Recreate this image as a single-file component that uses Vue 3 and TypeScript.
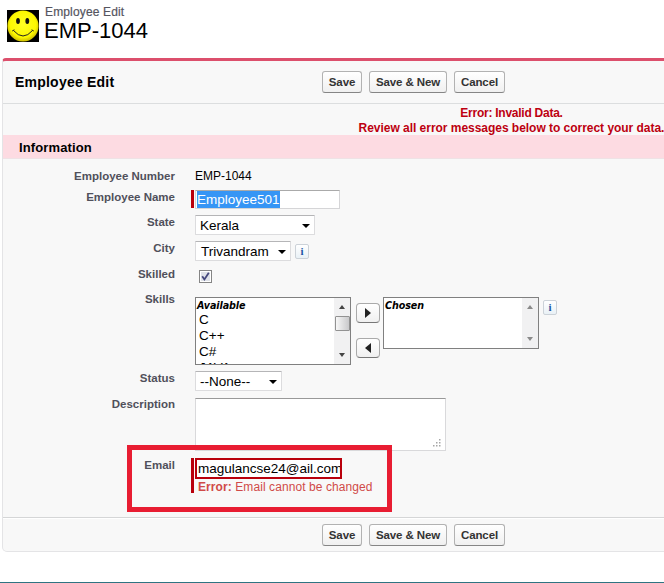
<script setup lang="ts">
import { ref } from 'vue'

const actions = [
  { label: 'Save', width: 40 },
  { label: 'Save & New', width: 78 },
  { label: 'Cancel', width: 51 },
]
const available = ref<string[]>(['C', 'C++', 'C#', 'JAVA'])
</script>

<template>
  <main class="page">
    <header class="page-head">
      <svg class="smiley" viewBox="0 0 32 32">
        <defs>
          <radialGradient id="face" cx="50%" cy="45%" r="52%">
            <stop offset="0" stop-color="#ffff24" />
            <stop offset="0.8" stop-color="#fcf800" />
            <stop offset="1" stop-color="#d6c800" />
          </radialGradient>
        </defs>
        <rect width="32" height="32" fill="#000" />
        <circle cx="16" cy="16" r="15.6" fill="url(#face)" />
        <ellipse cx="11" cy="11" rx="1.9" ry="3" fill="#111" />
        <ellipse cx="20.3" cy="11" rx="1.9" ry="3" fill="#111" />
        <path d="M6.5 20.5 Q16 31.5 25.5 20.5 M5.2 21 L7.4 19.8 M24.6 19.8 L26.8 21" fill="none" stroke="#222" stroke-width="1" />
      </svg>
      <div class="names">
        <div class="kind">Employee Edit</div>
        <h1>EMP-1044</h1>
      </div>
    </header>

    <section class="panel">
      <div class="bar">
        <h2>Employee Edit</h2>
        <div class="actions">
          <button v-for="a in actions" :key="a.label" :style="{ width: a.width + 'px' }">{{ a.label }}</button>
        </div>
      </div>
      <div class="alert">
        <div><span class="a1">Error: Invalid Data.</span></div>
        <div><span class="a2">Review all error messages below to correct your data.</span></div>
      </div>
      <h3 class="section">Information</h3>

      <div class="form">
        <div class="row r-number">
          <label>Employee Number</label>
          <div class="field static">EMP-1044</div>
        </div>
        <div class="row r-name">
          <label>Employee Name</label>
          <div class="field">
            <i class="req"></i>
            <div class="input"><span class="selected">Employee501</span></div>
          </div>
        </div>
        <div class="row r-pick">
          <label>State</label>
          <div class="field">
            <div class="select state"><span>Kerala</span><i class="caret"></i></div>
          </div>
        </div>
        <div class="row r-pick">
          <label>City</label>
          <div class="field">
            <div class="select city"><span>Trivandram</span><i class="caret"></i></div>
            <span class="info">i</span>
          </div>
        </div>
        <div class="row r-skilled">
          <label>Skilled</label>
          <div class="field">
            <svg class="check" viewBox="0 0 13 13">
              <rect x="0.5" y="0.5" width="12" height="12" fill="#fff" stroke="#858585" />
              <rect x="2" y="2" width="9" height="9" fill="#dfe2e8" />
              <path d="M3.2 6.2 L5.4 9.4 L9.8 2.8" fill="none" stroke="#44477c" stroke-width="1.8" />
            </svg>
          </div>
        </div>
        <div class="row r-skills">
          <label>Skills</label>
          <div class="field">
            <div class="list tall">
              <div class="items">
                <div class="caption">Available</div>
                <div v-for="s in available" :key="s" class="item">{{ s }}</div>
              </div>
              <div class="scroll"><i class="up"></i><i class="thumb"></i><i class="down"></i></div>
            </div>
            <div class="movers">
              <button class="move"><svg viewBox="0 0 6 10"><path d="M0 0 L6 5 L0 10Z" fill="#222" /></svg></button>
              <button class="move"><svg viewBox="0 0 6 10"><path d="M6 0 L0 5 L6 10Z" fill="#222" /></svg></button>
            </div>
            <div class="list short">
              <div class="items"><div class="caption chosen">Chosen</div></div>
              <div class="scroll dim"><i class="up"></i><i class="down"></i></div>
            </div>
            <span class="info">i</span>
          </div>
        </div>
        <div class="row r-pick">
          <label>Status</label>
          <div class="field">
            <div class="select status"><span>--None--</span><i class="caret"></i></div>
          </div>
        </div>
        <div class="row r-desc">
          <label>Description</label>
          <div class="field">
            <div class="area">
              <svg viewBox="0 0 8 8" fill="#a6a6a6">
                <path d="M6 0h1.5v1.5h-1.5z M3 3h1.5v1.5h-1.5z M6 3h1.5v1.5h-1.5z M0 6h1.5v1.5h-1.5z M3 6h1.5v1.5h-1.5z M6 6h1.5v1.5h-1.5z" />
              </svg>
            </div>
          </div>
        </div>
        <div class="row r-email">
          <label>Email</label>
          <div class="field">
            <i class="req long"></i>
            <div>
              <div class="input bad"><span>magulancse24@ail.com</span></div>
              <div class="msg"><b>Error:</b> Email cannot be changed</div>
            </div>
          </div>
          <div class="highlight"></div>
        </div>
      </div>

      <div class="bar foot">
        <div class="actions">
          <button v-for="a in actions" :key="a.label" :style="{ width: a.width + 'px' }">{{ a.label }}</button>
        </div>
      </div>
    </section>
    <div class="rule"></div>
  </main>
</template>

<style>
body { background: #fff; overflow: hidden; }
</style>

<style scoped>
* { box-sizing: border-box; }
.page { width: 664px; height: 583px; overflow: hidden; display: flex; flex-direction: column; font-family: "Liberation Sans", Arial, sans-serif; color: #000; }
.page-head { height: 58px; flex: none; display: flex; padding: 10px 0 0 7px; }
.smiley { width: 32px; height: 32px; flex: none; }
.names { padding-left: 6px; margin-top: -5px; white-space: nowrap; }
.kind { font-size: 12px; line-height: 14px; letter-spacing: 0.15px; color: #55555f; -webkit-text-stroke: 0.2px #55555f; }
h1, h2, h3 { margin: 0; }
h1 { margin-left: -1px; font-size: 22px; line-height: 23px; font-weight: 400; letter-spacing: 0; }
.panel { width: 1019px; height: 494px; flex: none; margin-left: 2px; background: #f8f8f8; border: 1px solid #e4e4e6; border-top: 3px solid #dc4f6c; border-radius: 4px 4px 5px 5px; display: flex; flex-direction: column; }
.bar { height: 43px; flex: none; display: flex; border-bottom: 1px solid #dcdedf; }
h2 { width: 319px; padding-left: 12px; font-size: 14px; line-height: 42px; letter-spacing: 0.22px; }
.actions { display: flex; gap: 7px; padding-top: 10px; }
.bar button { height: 22px; padding: 0; border: 1px solid #b2b2b2; border-bottom-color: #858585; border-radius: 3px; background: linear-gradient(#fff, #f0f0f0); font: bold 11.5px/20px "Liberation Sans", Arial, sans-serif; letter-spacing: -0.1px; color: #333; white-space: nowrap; }
.foot { height: 34px; border-top: 1px solid #d5d6d7; border-bottom: 0; box-shadow: inset 0 1px #fff; }
.foot .actions { padding: 6px 0 0 319px; }
.alert { height: 31px; padding-top: 2px; font-size: 12px; font-weight: 700; line-height: 15px; color: #bd0010; text-align: center; white-space: nowrap; }
.a1 { letter-spacing: -0.25px; }
.a2 { letter-spacing: -0.03px; }
.section { height: 24px; flex: none; padding-left: 16px; font-size: 13px; line-height: 25px; letter-spacing: 0.12px; background: #fddbe2; border-bottom: 1px solid #efe2e5; }
.form { flex: 1; padding-top: 7px; }
.row { display: flex; position: relative; }
.row label { width: 172px; flex: none; padding-top: 3px; text-align: right; font-size: 11.5px; line-height: 14px; font-weight: 700; letter-spacing: 0; color: #50505b; }
.field { position: relative; display: flex; align-items: flex-start; padding: 3px 0 0 20px; white-space: nowrap; }
.r-number { height: 21px; }
.r-name { height: 25px; }
.r-pick { height: 26px; }
.r-skilled { height: 25px; }
.r-skills { height: 79px; }
.r-desc { height: 61px; }
.r-email { height: 62px; }
.r-skilled .field { padding: 6px 0 0 24px; }
.r-skills .field { padding-top: 8px; }
.r-desc .field { padding-top: 4px; }
.static { font-size: 12px; line-height: 15px; letter-spacing: 0; }
.req { width: 3px; height: 18px; background: #b9000c; margin: 0 1px 0 -4px; flex: none; }
.req.long { height: 35px; }
.input { width: 145px; height: 19px; padding-left: 1px; border: 1px solid #d5d5d7; border-top-color: #aaa; background: #fff; font-size: 13.5px; line-height: 17px; overflow: hidden; }
.selected { display: inline-block; background: #3695f5; color: #fff; height: 17px; line-height: 18px; }
.input.bad { width: 147px; height: 21px; border: 2px solid #b9000c; padding-left: 1px; }
.msg { padding-left: 3px; font-size: 12px; line-height: 16px; color: #d04a48; letter-spacing: 0.08px; }
.select { height: 20px; background: #fff; border: 1px solid #dcdcde; border-top-color: #b5b5b7; border-radius: 1px; display: flex; justify-content: space-between; align-items: center; padding: 1px 4px 0; font-size: 13.5px; line-height: 18px; }
.state { width: 120px; }
.city { width: 96px; padding-left: 5px; }
.status { width: 87px; }
.caret { width: 0; height: 0; border: 4px solid transparent; border-top-color: #000; border-bottom: 0; margin-top: 1px; }
.info { width: 14px; height: 15px; margin: 3px 0 0 4px; border: 1px solid #ccd2d8; border-radius: 2px; background: linear-gradient(#fff, #e9f1f6); font: bold 11px/13px "Liberation Serif", serif; color: #1d55a5; text-align: center; }
.check { width: 13px; height: 13px; }
.list { width: 156px; border: 1px solid #808080; background: #fff; display: flex; overflow: hidden; }
.tall { height: 68px; }
.short { height: 52px; }
.items { flex: 1; overflow: hidden; }
.caption { font: italic bold 9.6px/15px "DejaVu Sans", Verdana, sans-serif; letter-spacing: -0.1px; padding-left: 1px; }
.item { font-size: 13.5px; line-height: 16px; padding-left: 3px; position: relative; top: -1px; }
.scroll { width: 16px; background: #f1f1f2; display: flex; flex-direction: column; align-items: center; justify-content: space-between; padding: 7px 0; }
.up, .down { width: 0; height: 0; border: 3.5px solid transparent; }
.up { border-bottom: 4px solid #444; border-top: 0; }
.down { border-top: 4px solid #444; border-bottom: 0; }
.dim .up { border-bottom-color: #8a8a8a; }
.dim .down { border-top-color: #8a8a8a; }
.thumb { width: 15px; height: 15px; margin: 0 0 16px; border: 1px solid #929292; border-radius: 1px; background: linear-gradient(90deg, #f7f7f7, #c9c9cb); }
.movers { width: 24px; margin: 6px 3px 0 5px; display: flex; flex-direction: column; gap: 15px; }
.move { width: 24px; height: 20px; padding: 0; border: 1px solid #aaa; border-bottom-color: #777; border-radius: 4px; background: linear-gradient(#fff, #f0f0f0); display: flex; align-items: center; justify-content: center; }
.move svg { width: 6px; height: 10px; }
.area { width: 251px; height: 53px; border: 1px solid #d9d9db; border-top-color: #999; background: #fff; display: flex; justify-content: flex-end; align-items: flex-end; padding: 0 4px 3px; }
.area svg { width: 8px; height: 8px; }
.highlight { position: absolute; left: 124px; top: -10px; width: 265px; height: 67px; border: 5px solid #e81d32; }
.rule { height: 1px; margin-top: 30px; background: #2f7482; }
</style>
